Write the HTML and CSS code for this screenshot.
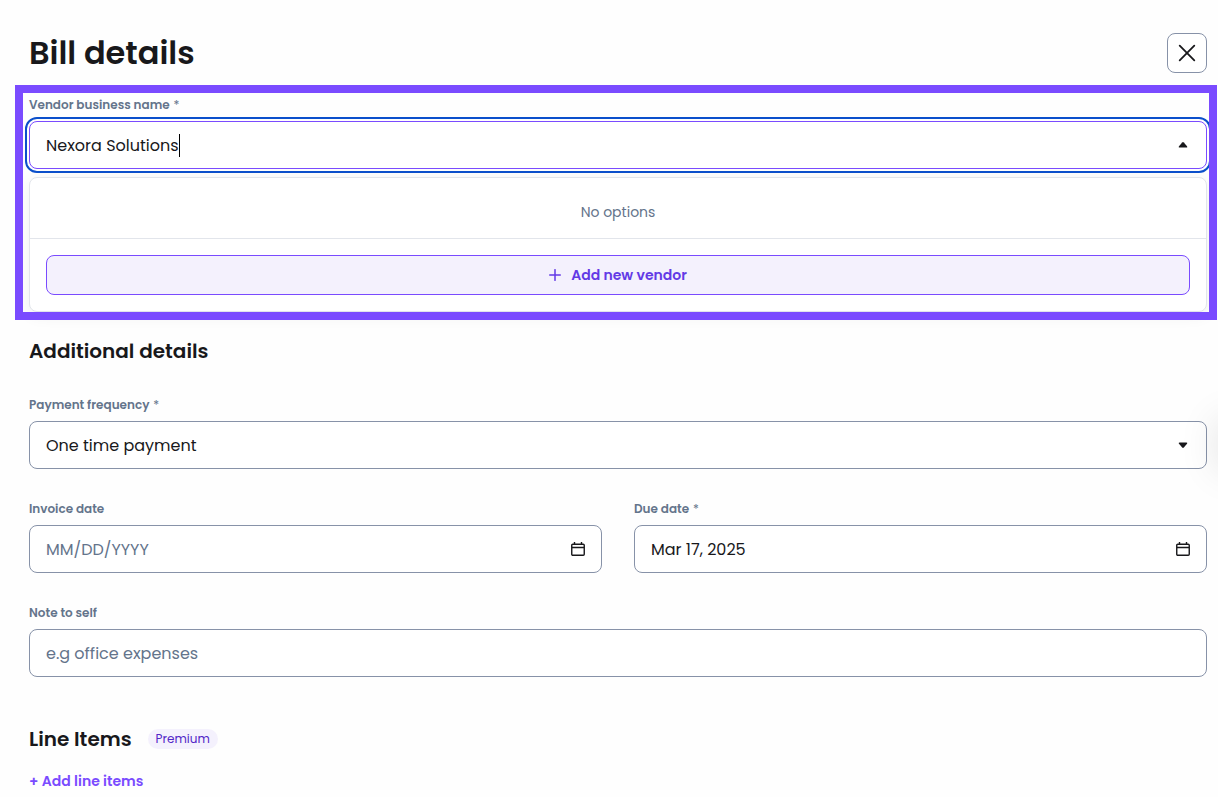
FILE: index.html
```html
<!DOCTYPE html>
<html lang="en">
<head>
<meta charset="utf-8">
<meta name="viewport" content="width=device-width, initial-scale=1">
<title>Bill details</title>
<link rel="stylesheet" href="styles.css">
</head>
<body>
<main class="panel">
  <header class="panel-header">
    <h1 class="title">Bill details</h1>
    <button class="close" type="button" aria-label="Close">
      <svg width="18" height="18" viewBox="0 0 18 18" fill="none" stroke="currentColor" stroke-width="1.800" stroke-linecap="round"><path d="M1.700 1.700l14.600 14.600M16.300 1.700L1.700 16.300"/></svg>
    </button>
  </header>

  <section class="vendor">
    <div class="field">
      <label class="label" for="vendor">Vendor business name <span class="star">*</span></label>
      <div class="control control-focus">
        <input class="input input-fit" id="vendor" type="text" value="Nexora Solutions" role="combobox" aria-expanded="true" aria-controls="vendor-menu">
        <span class="caret"></span>
        <svg class="arrow" width="10" height="6" viewBox="0 0 10 6"><path d="M4.200.5q.8-.8 1.600 0L9 4.200q.8 1.300-.6 1.300H1.600Q.2 5.500 1 4.200z" fill="currentColor"/></svg>
      </div>
    </div>
    <div class="menu" id="vendor-menu">
      <p class="menu-empty">No options</p>
      <div class="menu-footer">
        <button class="add-vendor" type="button">
          <svg width="12" height="12" viewBox="0 0 12 12" fill="none" stroke="currentColor" stroke-width="1.500" stroke-linecap="round"><path d="M6 .7v10.600M.7 6h10.600"/></svg>
          Add new vendor
        </button>
      </div>
    </div>
  </section>

  <section class="details">
    <h2 class="subtitle">Additional details</h2>
    <div class="field">
      <label class="label" for="frequency">Payment frequency <span class="star">*</span></label>
      <div class="control">
        <select class="input" id="frequency"><option>One time payment</option></select>
        <svg class="arrow" width="10" height="6" viewBox="0 0 10 6"><path d="M4.200 5.500q.8.8 1.600 0L9 1.800Q9.800.5 8.400.5H1.600Q.2.5 1 1.800z" fill="currentColor"/></svg>
      </div>
    </div>
    <div class="dates">
      <div class="field">
        <label class="label" for="invoice-date">Invoice date</label>
        <div class="control">
          <input class="input" id="invoice-date" type="text" placeholder="MM/DD/YYYY">
          <svg class="calendar" width="14" height="14" viewBox="0 0 14 14" fill="none" stroke="currentColor" stroke-width="1.400"><rect x=".75" y="2.250" width="12.500" height="11" rx="1"/><path d="M1 5.500h12M3.500 0v2.500M10.500 0v2.500"/></svg>
        </div>
      </div>
      <div class="field">
        <label class="label" for="due-date">Due date <span class="star">*</span></label>
        <div class="control">
          <input class="input" id="due-date" type="text" value="Mar 17, 2025">
          <svg class="calendar" width="14" height="14" viewBox="0 0 14 14" fill="none" stroke="currentColor" stroke-width="1.400"><rect x=".75" y="2.250" width="12.500" height="11" rx="1"/><path d="M1 5.500h12M3.500 0v2.500M10.500 0v2.500"/></svg>
        </div>
      </div>
    </div>
    <div class="field">
      <label class="label" for="note">Note to self</label>
      <div class="control">
        <input class="input" id="note" type="text" placeholder="e.g office expenses">
      </div>
    </div>
  </section>

  <section class="items">
    <div class="items-header">
      <h2 class="subtitle">Line Items</h2>
      <span class="badge">Premium</span>
    </div>
    <button class="add-item" type="button">+ Add line items</button>
  </section>
</main>
<div class="side-tab"></div>
</body>
</html>
```
FILE: styles.css
```css
* {
  box-sizing: border-box;
}

body {
  margin: 0;
  background: #fefefe;
  color: #18181b;
  font-family: Poppins, Inter, "Liberation Sans", sans-serif;
  font-size: 16px;
}

button,
input,
select {
  font: inherit;
  color: inherit;
}

h1,
h2,
p {
  margin: 0;
}

.panel {
  padding: 33px 11px 0 29px;
}

.panel-header {
  display: flex;
  align-items: center;
  justify-content: space-between;
  margin-bottom: 24px;
}

.title {
  font-size: 32px;
  line-height: 40px;
  font-weight: 600;
}

.close {
  display: flex;
  align-items: center;
  justify-content: center;
  width: 40px;
  height: 40px;
  padding: 0;
  border: 1px solid #8792a8;
  border-radius: 8px;
  background: #fff;
}

.vendor {
  position: relative;
  margin-bottom: 25px;
}

.vendor::after {
  content: "";
  position: absolute;
  inset: -12px -10px -8px -14px;
  border: 8px solid #7a4bff;
  pointer-events: none;
}

.field {
  display: flex;
  flex-direction: column;
  gap: 8px;
}

.label {
  color: #64748b;
  font-size: 12px;
  line-height: 16px;
  font-weight: 600;
}

.star {
  font-weight: 400;
  margin-left: 1px;
}

.control {
  display: flex;
  align-items: center;
  height: 48px;
  padding: 0 16px;
  border: 1px solid #8792a8;
  border-radius: 8px;
  background: #fff;
}

.control-focus {
  border-color: #7a4bff;
  outline: 2px solid #0b4fcb;
  outline-offset: 2px;
}

.input {
  flex: 1;
  min-width: 0;
  height: 46px;
  padding: 0;
  border: 0;
  outline: 0;
  background: none;
  appearance: none;
}

.input::placeholder {
  color: #64748b;
  opacity: 1;
}

.input-fit {
  flex: none;
  field-sizing: content;
}

.caret {
  width: 1px;
  height: 23px;
  background: #000;
}

.arrow {
  flex: none;
  margin-left: auto;
  margin-right: 2px;
}

.calendar {
  flex: none;
}

.menu {
  margin-top: 8px;
  border: 1px solid #e2e5eb;
  border-radius: 8px;
  background: #fff;
  box-shadow: 0 4px 16px rgba(0, 0, 0, 0.06);
}

.menu-empty {
  padding: 24px 16px 16px;
  border-bottom: 1px solid #e2e5eb;
  color: #64748b;
  font-size: 14px;
  line-height: 20px;
  text-align: center;
}

.menu-footer {
  padding: 16px;
}

.add-vendor {
  display: flex;
  align-items: center;
  justify-content: center;
  gap: 10px;
  width: 100%;
  height: 40px;
  border: 1px solid #7a4bff;
  border-radius: 8px;
  background: #f4f1fd;
  color: #633ae6;
  font-size: 14px;
  font-weight: 600;
}

.details {
  display: flex;
  flex-direction: column;
  gap: 32px;
  margin-bottom: 48px;
}

.subtitle {
  font-size: 20px;
  line-height: 28px;
  font-weight: 600;
}

.dates {
  display: grid;
  grid-template-columns: 1fr 1fr;
  gap: 32px;
}

.items-header {
  display: flex;
  align-items: center;
  gap: 16px;
  margin-bottom: 18px;
}

.badge {
  padding: 0 8px;
  border-radius: 10px;
  background: #f4f1fd;
  color: #5327c8;
  font-size: 12px;
  line-height: 20px;
}

.add-item {
  display: block;
  padding: 0;
  border: 0;
  background: none;
  color: #7a4bff;
  font-size: 14px;
  line-height: 20px;
  font-weight: 600;
}

.side-tab {
  position: fixed;
  top: 421px;
  right: -48px;
  width: 48px;
  height: 48px;
  box-shadow: 0 0 40px rgba(0, 0, 0, 0.12);
}
```
